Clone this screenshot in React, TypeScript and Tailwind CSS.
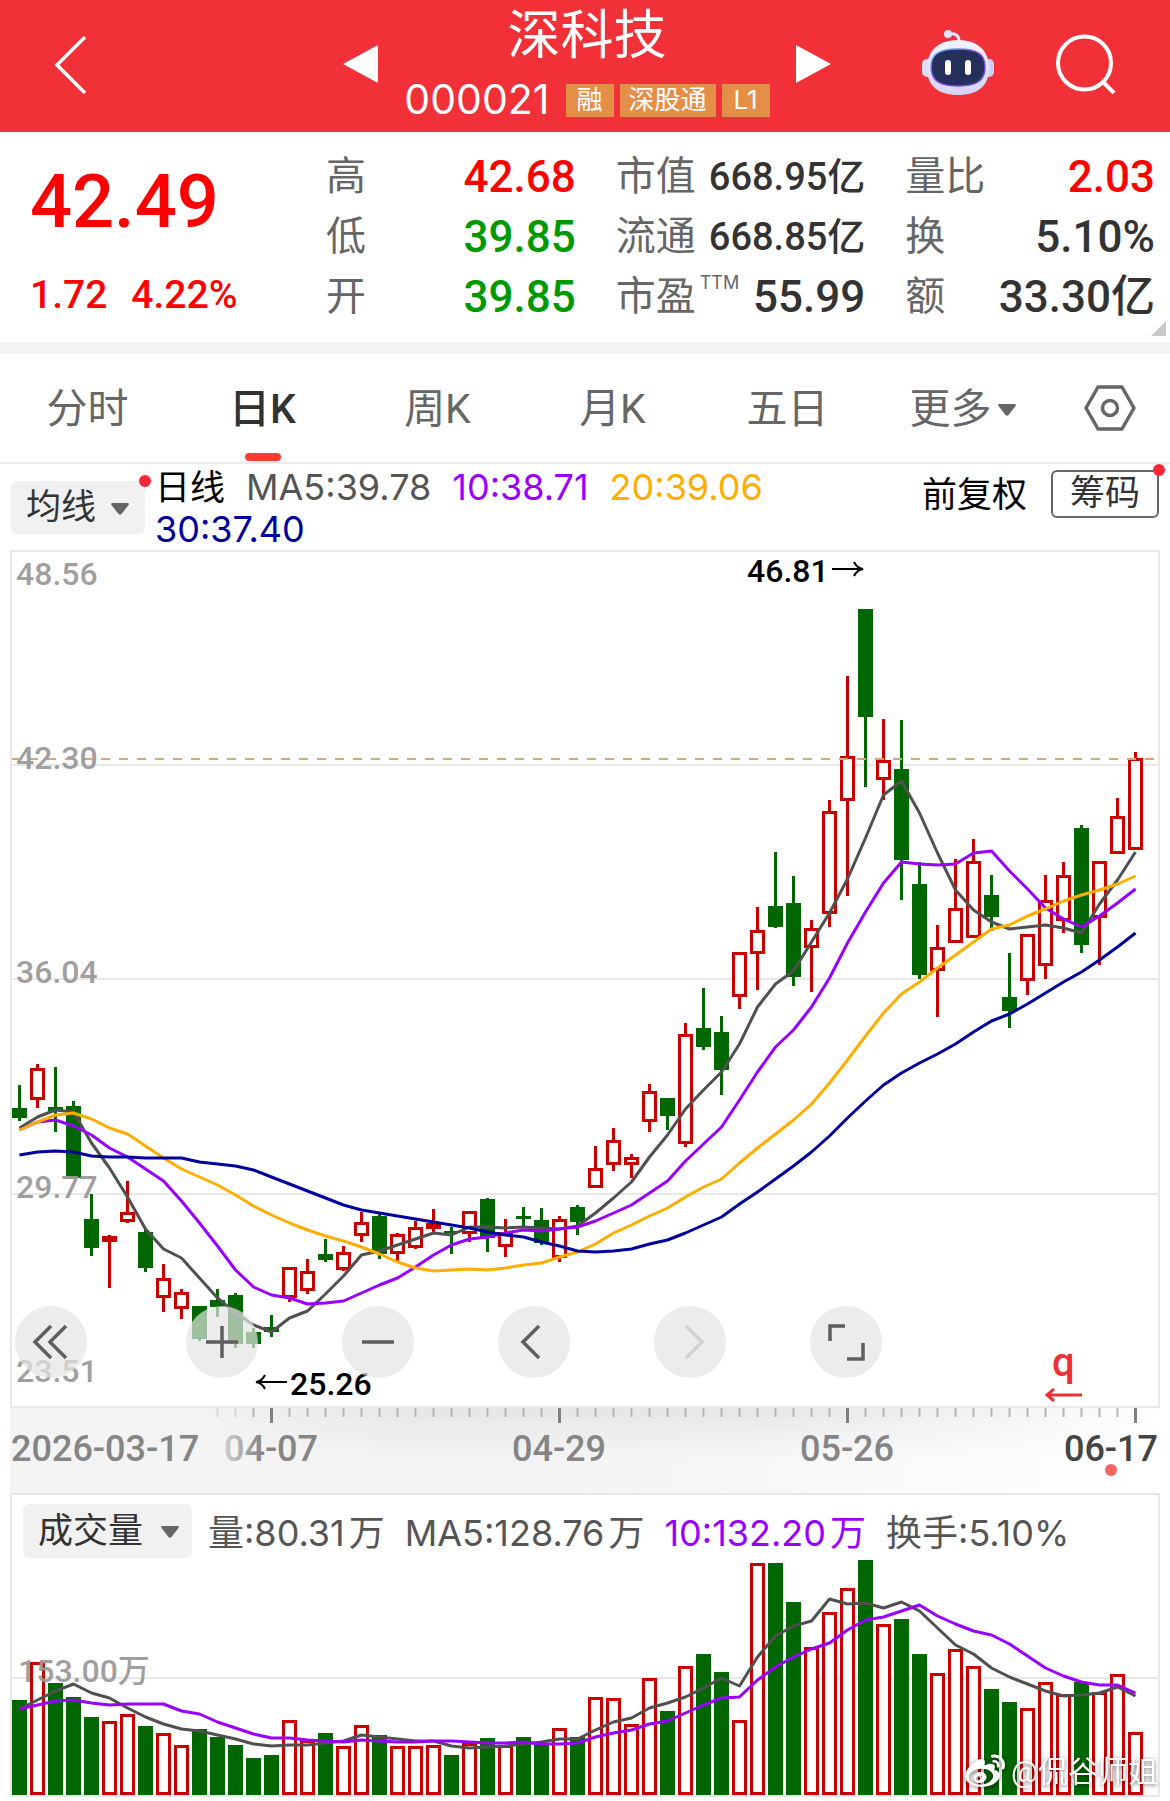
import { useState } from "react"
import { FaWeibo } from "react-icons/fa"

type Candle = [dir: "u" | "d", high: number, low: number, top: number, bottom: number]

const STEP = 18
const FIRST_X = 19.5

const candles: Candle[] = [
  ["d", 1085, 1121, 1108, 1118], ["u", 1064, 1108, 1068, 1100], ["d", 1067, 1132, 1107, 1111],
  ["d", 1101, 1179, 1106, 1178], ["d", 1194, 1256, 1219, 1248], ["u", 1235, 1288, 1236, 1242],
  ["u", 1181, 1223, 1212, 1222], ["d", 1230, 1272, 1232, 1268], ["u", 1264, 1312, 1278, 1298],
  ["u", 1289, 1319, 1292, 1309], ["d", 1306, 1341, 1306, 1339], ["d", 1289, 1317, 1300, 1307],
  ["d", 1293, 1348, 1295, 1344], ["d", 1328, 1348, 1332, 1344], ["d", 1315, 1337, 1327, 1332],
  ["u", 1267, 1302, 1267, 1298], ["u", 1259, 1294, 1271, 1291], ["d", 1239, 1262, 1254, 1260],
  ["u", 1246, 1271, 1252, 1270], ["u", 1212, 1242, 1222, 1236], ["d", 1213, 1259, 1216, 1254],
  ["u", 1233, 1263, 1234, 1254], ["u", 1221, 1249, 1227, 1248], ["u", 1209, 1232, 1223, 1229],
  ["d", 1227, 1254, 1231, 1233], ["u", 1211, 1242, 1211, 1234], ["d", 1198, 1252, 1199, 1238],
  ["u", 1219, 1257, 1232, 1247], ["d", 1207, 1227, 1216, 1219], ["d", 1208, 1245, 1220, 1243],
  ["u", 1216, 1262, 1219, 1258], ["d", 1205, 1235, 1207, 1222], ["u", 1146, 1188, 1168, 1188],
  ["u", 1128, 1171, 1140, 1165], ["u", 1154, 1178, 1157, 1165], ["u", 1084, 1132, 1091, 1122],
  ["d", 1098, 1130, 1098, 1116], ["u", 1023, 1147, 1034, 1144], ["d", 988, 1050, 1028, 1047],
  ["d", 1016, 1095, 1032, 1070], ["u", 952, 1009, 952, 997], ["u", 907, 990, 930, 954],
  ["d", 852, 928, 906, 927], ["d", 876, 986, 903, 977], ["u", 920, 992, 928, 948],
  ["u", 800, 927, 811, 914], ["u", 676, 896, 756, 801], ["d", 609, 787, 609, 717],
  ["u", 719, 800, 760, 780], ["d", 720, 900, 769, 860], ["d", 862, 979, 884, 975],
  ["u", 925, 1017, 947, 971], ["u", 859, 943, 908, 943], ["u", 839, 938, 861, 938],
  ["d", 875, 931, 895, 917], ["d", 953, 1028, 997, 1011], ["u", 934, 995, 934, 981],
  ["u", 875, 979, 900, 966], ["u", 862, 933, 875, 921], ["d", 825, 953, 828, 945],
  ["u", 861, 965, 861, 918], ["u", 798, 854, 816, 854], ["u", 752, 850, 758, 850],
]

const ma5 = [
  1128, 1117, 1110, 1112, 1143, 1168, 1197, 1229, 1249, 1258, 1278, 1298, 1313, 1325, 1332, 1318, 1311, 1294, 1276, 1255, 1251,
  1245, 1239, 1233, 1235, 1227, 1227, 1228, 1227, 1228, 1229, 1226, 1213, 1198, 1182, 1157, 1135, 1109, 1090, 1072, 1044, 1007,
  984, 971, 942, 913, 879, 838, 795, 781, 813, 853, 890, 910, 922, 929, 927, 925, 928, 933, 904, 880, 852,
]
const ma10 = [
  1130, 1122, 1120, 1126, 1135, 1148, 1157, 1169, 1181, 1201, 1223, 1246, 1270, 1287, 1295, 1298, 1304, 1303, 1301, 1293, 1285,
  1278, 1267, 1255, 1245, 1239, 1237, 1233, 1230, 1231, 1229, 1227, 1221, 1213, 1205, 1193, 1181, 1161, 1144, 1127, 1100, 1072,
  1047, 1030, 1007, 978, 943, 912, 883, 862, 864, 865, 864, 853, 851, 871, 889, 908, 919, 927, 916, 903, 889,
]
const ma20 = [
  1130, 1122, 1115, 1113, 1119, 1128, 1134, 1146, 1158, 1169, 1177, 1185, 1195, 1206, 1215, 1223, 1230, 1236, 1241, 1247, 1254,
  1262, 1268, 1271, 1270, 1269, 1270, 1268, 1265, 1263, 1257, 1252, 1244, 1233, 1225, 1216, 1208, 1197, 1187, 1179, 1163, 1148,
  1134, 1120, 1104, 1083, 1060, 1036, 1013, 994, 982, 968, 955, 942, 929, 925, 916, 909, 901, 895, 890, 884, 876,
]
const ma30 = [
  1155, 1152, 1151, 1152, 1156, 1157, 1157, 1158, 1158, 1158, 1162, 1164, 1166, 1170, 1177, 1184, 1191, 1198, 1205, 1210, 1213,
  1216, 1219, 1222, 1225, 1228, 1232, 1235, 1237, 1242, 1246, 1251, 1252, 1251, 1249, 1244, 1240, 1233, 1225, 1217, 1204, 1192,
  1179, 1166, 1152, 1136, 1118, 1101, 1085, 1073, 1063, 1054, 1044, 1032, 1021, 1014, 1004, 993, 982, 972, 960, 947, 933,
]

const volumes = [
  1700, 1662, 1683, 1697, 1717, 1721, 1714, 1726, 1733, 1745, 1729, 1737, 1745, 1758, 1755, 1720, 1740, 1733, 1746, 1725, 1735,
  1746, 1746, 1745, 1755, 1743, 1738, 1745, 1737, 1743, 1728, 1737, 1697, 1698, 1724, 1678, 1711, 1666, 1654, 1672, 1720, 1563,
  1563, 1602, 1647, 1612, 1588, 1560, 1624, 1619, 1654, 1673, 1649, 1666, 1689, 1702, 1708, 1682, 1694, 1682, 1692, 1674, 1732,
]
const vol5 = [
  1709, 1700, 1691, 1684, 1693, 1698, 1708, 1717, 1724, 1729, 1731, 1735, 1739, 1744, 1746, 1745, 1745, 1743, 1741, 1735, 1737,
  1739, 1741, 1741, 1746, 1748, 1747, 1746, 1744, 1742, 1739, 1739, 1730, 1722, 1718, 1708, 1703, 1697, 1688, 1678, 1686, 1657,
  1636, 1626, 1621, 1599, 1604, 1603, 1608, 1602, 1611, 1628, 1645, 1654, 1668, 1677, 1684, 1691, 1696, 1695, 1693, 1687, 1696,
]
const vol10 = [
  1709, 1705, 1701, 1700, 1703, 1705, 1704, 1704, 1704, 1711, 1714, 1722, 1728, 1734, 1738, 1738, 1740, 1741, 1742, 1740, 1741,
  1742, 1742, 1741, 1741, 1742, 1743, 1743, 1742, 1744, 1744, 1743, 1737, 1733, 1730, 1724, 1721, 1713, 1705, 1698, 1697, 1680,
  1667, 1657, 1649, 1643, 1630, 1620, 1617, 1611, 1605, 1616, 1624, 1631, 1635, 1644, 1656, 1668, 1676, 1682, 1685, 1685, 1693,
]

const stats = [
  { label: "高", value: "42.68", color: "text-[#ff0000]" },
  { label: "市值", value: "668.95亿", color: "text-[#333]", small: true },
  { label: "量比", value: "2.03", color: "text-[#ff0000]" },
  { label: "低", value: "39.85", color: "text-[#009900]" },
  { label: "流通", value: "668.85亿", color: "text-[#333]", small: true },
  { label: "换", value: "5.10%", color: "text-[#333]" },
  { label: "开", value: "39.85", color: "text-[#009900]" },
  { label: "市盈", sup: "TTM", value: "55.99", color: "text-[#333]" },
  { label: "额", value: "33.30亿", color: "text-[#333]" },
]

const tabs = ["分时", "日K", "周K", "月K", "五日", "更多"]

const tools = [
  { name: "最早", d: "M36 20L20 36L36 52M51 20L35 36L51 52" },
  { name: "放大", d: "M20 36H52M36 20V52" },
  { name: "缩小", d: "M20 36H52" },
  { name: "左移", d: "M41 20L25 36L41 52" },
  { name: "右移", d: "M32 20L48 36L32 52", disabled: true },
  { name: "全屏", d: "M35 20H20V35M37 53H53V37" },
]

const xAt = (i: number) => FIRST_X + i * STEP
const toPoints = (ys: number[]) => ys.map((y, i) => `${xAt(i)},${y}`).join(" ")

function Line({ ys, color }: { ys: number[]; color: string }) {
  return <polyline points={toPoints(ys)} fill="none" stroke={color} strokeWidth="3" strokeLinejoin="round" />
}

function Caret() {
  return (
    <svg viewBox="0 0 18 12" className="w-[18px] h-3 shrink-0" fill="#666" aria-hidden="true">
      <path d="M1 0H17Q18.500 .5 17.500 2L10.500 11Q9 12.500 7.500 11L.5 2Q-.5 .5 1 0Z" />
    </svg>
  )
}

function Robot() {
  return (
    <svg viewBox="0 0 72 67" className="w-[72px] h-[67px]" aria-hidden="true">
      <defs>
        <linearGradient id="shell" x1="0" y1="0" x2="0" y2="1">
          <stop offset="0" stopColor="#f4f4ff" />
          <stop offset="1" stopColor="#d3d4f5" />
        </linearGradient>
        <linearGradient id="rim" x1="0" y1="0" x2="1" y2="1">
          <stop offset="0" stopColor="#58c8ee" />
          <stop offset="0.5" stopColor="#8c3ee8" />
          <stop offset="1" stopColor="#5b4df0" />
        </linearGradient>
      </defs>
      <path d="M26 5C33 4 37 6 37 12" fill="none" stroke="#e2e3fa" strokeWidth="3" />
      <circle cx="26" cy="5" r="4" fill="#dfe6fb" />
      <rect x="0" y="30" width="10" height="18" rx="5" fill="#dcdcf8" />
      <rect x="62" y="30" width="10" height="18" rx="5" fill="#cfcff5" />
      <path d="M36 11C56 11 67 22 67 39C67 57 56 66 36 66C16 66 5 57 5 39C5 22 16 11 36 11Z" fill="url(#shell)" />
      <path d="M36 20C55 20 63 25 63 38C63 52 54 57 36 57C18 57 9 52 9 38C9 25 17 20 36 20Z" fill="#25305a" stroke="url(#rim)" strokeWidth="1.500" />
      <rect x="23" y="31" width="6" height="15" rx="3" fill="#fff" />
      <rect x="43" y="31" width="6" height="15" rx="3" fill="#fff" />
    </svg>
  )
}

function Header() {
  return (
    <header className="grid grid-cols-[1fr_488px_1fr] items-center h-[132px] bg-[#f23037] text-white">
      <button aria-label="返回" className="justify-self-start ml-[54px] pb-0.5">
        <svg viewBox="0 0 32 58" className="w-8 h-[58px]" fill="none" stroke="#fff" strokeWidth="3.500">
          <path d="M31 1L3 29L31 57" />
        </svg>
      </button>

      <div className="flex items-center justify-between ml-0.5 -mr-0.5">
        <button aria-label="上一只" className="pb-1">
          <svg viewBox="0 0 35 38" className="w-[35px] h-[38px]" fill="#fff"><path d="M35 0V38L0 19Z" /></svg>
        </button>
        <div className="flex flex-col items-center pt-1.5">
          <h1 className="text-[53px] leading-[60px]">深科技</h1>
          <div className="flex items-center gap-1.5 h-[66px] pt-0.5">
            <span className="font-[Inter] text-[41px] mr-2.5">000021</span>
            <span className="h-[33px] leading-8 px-[11px] text-[26px] bg-[#e58e48]">融</span>
            <span className="h-[33px] leading-8 px-[9px] text-[26px] bg-[#e58e48]">深股通</span>
            <span className="h-[33px] leading-8 px-3 text-[26px] bg-[#e58e48] font-[Inter]">L1</span>
          </div>
        </div>
        <button aria-label="下一只" className="pb-1">
          <svg viewBox="0 0 35 38" className="w-[35px] h-[38px]" fill="#fff"><path d="M0 0V38L35 19Z" /></svg>
        </button>
      </div>

      <div className="flex items-center justify-end gap-[62px] pr-[54px]">
        <button aria-label="智能助手" className="pb-2"><Robot /></button>
        <button aria-label="搜索" className="pb-1">
          <svg viewBox="0 0 60 60" className="w-[60px] h-[60px]" fill="none" stroke="#fff" strokeWidth="4">
            <circle cx="28.500" cy="29" r="26.500" />
            <path d="M47 48L58 59" />
          </svg>
        </button>
      </div>
    </header>
  )
}

function Quote() {
  return (
    <section className="relative flex h-[210px] pt-[15px] font-medium">
      <div className="w-[326px] shrink-0 pl-[30px] text-[#ff0000]">
        <div className="text-[74px] leading-[110px]">42.49</div>
        <div className="flex gap-6 text-[39px] leading-[76px]">
          <span>1.72</span>
          <span>4.22%</span>
        </div>
      </div>
      <dl className="flex-1 grid grid-cols-3 gap-x-10 auto-rows-[60px] pr-[15px]">
        {stats.map((s) => (
          <div key={s.label} className="flex items-center justify-between whitespace-nowrap">
            <dt className="flex text-[40px] leading-[60px] font-normal text-[#666]">
              {s.label}
              {s.sup && <sup className="top-0 pt-1 pl-1 text-[18px] leading-6 font-[Inter]">{s.sup}</sup>}
            </dt>
            <dd className={`${s.small ? "text-[38px]" : "text-[44px]"} leading-[60px] ${s.color}`}>{s.value}</dd>
          </div>
        ))}
      </dl>
      <svg viewBox="0 0 15 15" className="absolute right-1 bottom-1.5 w-[15px] h-[15px]" fill="#c9c9c9" aria-hidden="true">
        <path d="M15 0V15H0Z" />
      </svg>
    </section>
  )
}

function Tabs() {
  const [active, setActive] = useState("日K")

  return (
    <nav className="flex h-[108px] border-t-[12px] border-b-2 border-t-[#f4f4f4] border-b-[#ebebeb] box-content text-[41px] text-[#666]">
      {tabs.map((t) => (
        <button
          key={t}
          onClick={() => setActive(t)}
          className={`relative flex-1 flex items-center justify-center gap-1.5 pt-1 ${t === active ? "font-medium text-[#333]" : ""}`}
        >
          {t}
          {t === "更多" && <Caret />}
          {t === active && <span className="absolute bottom-px w-9 h-2 rounded-full bg-[#ff3b30]"></span>}
        </button>
      ))}
      <button aria-label="设置" className="w-[120px] flex items-center justify-center">
        <svg viewBox="0 0 52 46" className="w-[52px] h-[46px]" fill="none" stroke="#666" strokeWidth="3.500" strokeLinejoin="round">
          <path d="M14 2H38L50 23L38 44H14L2 23Z" />
          <circle cx="26" cy="23" r="7.500" />
        </svg>
      </button>
    </nav>
  )
}

function Legend() {
  return (
    <div className="flex h-[86px] pt-0.5 px-[11px]">
      <button className="relative flex items-center justify-between w-[134px] h-[53px] mt-[15px] pt-0.5 pl-[15px] pr-4 shrink-0 rounded-md bg-[#f1f1f1] text-[35px] text-[#333]">
        均线
        <Caret />
        <span className="absolute -top-1.5 -right-1.5 w-3 h-3 rounded-full bg-[#fb2538]"></span>
      </button>
      <div className="flex flex-wrap content-start gap-x-[21px] w-[660px] ml-2.5 text-[36px] leading-[42px] font-[Inter,'Noto_Sans_CJK_SC',sans-serif]">
        <span className="text-[35px] text-black">日线</span>
        <span className="text-[#555]">MA5:39.78</span>
        <span className="text-[#9900ff]">10:38.71</span>
        <span className="text-[#ffae00]">20:39.06</span>
        <span className="text-[#00009c]">30:37.40</span>
      </div>
      <button className="ml-auto mr-6 h-[60px] text-[35px] text-black">前复权</button>
      <button className="relative w-[108px] h-12 mt-1 border-2 border-[#666] rounded-md text-[35px] leading-[44px] text-[#333]">
        筹码
        <span className="absolute -top-2 -right-2 w-3 h-3 rounded-full bg-[#fb2538]"></span>
      </button>
    </div>
  )
}

function PriceChart() {
  return (
    <div className="relative border-2 border-[#e8e8e8]">
      <svg viewBox="12 552 1146 854" className="block w-full font-medium text-[32px]" role="img" aria-label="日K线图">
        <path d="M12 765H1158M12 979H1158M12 1194H1158" stroke="#e8e8e8" strokeWidth="2" />
        {candles.map(([dir, high, low, top, bottom], i) => {
          const x = xAt(i)
          return dir === "u" ? (
            <g key={i} fill="none" stroke="#c80000" strokeWidth="3">
              <path d={`M${x} ${high}V${top}M${x} ${bottom}V${low}`} />
              <rect x={x - 6} y={top + 1.5} width="12" height={bottom - top - 3} fill="#fff" />
            </g>
          ) : (
            <g key={i} fill="#006600">
              <rect x={x - 1.5} y={high} width="3" height={low - high} />
              <rect x={x - 7.5} y={top} width="15" height={bottom - top} />
            </g>
          )
        })}
        <path d="M11 759H1158" stroke="#d9a866" strokeWidth="2" strokeDasharray="9 9" />
        <Line ys={ma5} color="#505050" />
        <Line ys={ma10} color="#9900ff" />
        <Line ys={ma20} color="#ffae00" />
        <Line ys={ma30} color="#00009c" />

        <g fill="#999" fillOpacity="0.95">
          <text x="16" y="585">48.56</text>
          <text x="16" y="769">42.30</text>
          <text x="16" y="983">36.04</text>
          <text x="16" y="1198">29.77</text>
          <text x="16" y="1382">23.51</text>
        </g>
        <g fill="#000">
          <text x="747" y="582">46.81</text>
          <text x="290" y="1395">25.26</text>
        </g>
        <g fill="none" stroke="#000" strokeWidth="2">
          <path d="M832 569H863M854 562Q857 568 863 569Q857 570 854 576" />
          <path d="M287 1382H256M265 1375Q262 1381 256 1382Q262 1383 265 1389" />
        </g>
        <text x="1052" y="1376" fill="#f03030" className="text-[40px]">q</text>
        <path d="M1082 1395H1047M1054 1389L1047 1395L1054 1401" fill="none" stroke="#f03030" strokeWidth="3" />
      </svg>

      <div className="absolute left-[3px] bottom-[28px] flex gap-[84px]">
        {tools.map((t, i) => (
          <button
            key={t.name}
            aria-label={t.name}
            disabled={t.disabled}
            className={`w-[72px] h-[72px] rounded-full bg-[#e4e4e4]/70 ${i === 0 ? "mr-[15px]" : ""} ${t.disabled ? "text-[#d2d2d2]" : "text-[#5f5f5f]"}`}
          >
            <svg viewBox="0 0 72 72" fill="none" stroke="currentColor" strokeWidth="3.500">
              <path d={t.d} />
            </svg>
          </button>
        ))}
      </div>
    </div>
  )
}

function DateAxis() {
  // minor ticks only start once the pinned start date is cleared
  const ticks = candles.map((_, i) => i).filter((i) => i >= 11)

  return (
    <svg viewBox="10 1408 1150 85" className="block w-full font-medium text-[36px]" role="img" aria-label="日期">
      <defs>
        <linearGradient id="strip" x1="0" y1="0" x2="1" y2="0">
          <stop offset="0.5" stopColor="#f4f4f4" />
          <stop offset="1" stopColor="#ffffff" />
        </linearGradient>
        <linearGradient id="shade" x1="0" y1="0" x2="0" y2="1">
          <stop offset="0" stopColor="#e6e6e6" />
          <stop offset="1" stopColor="#e6e6e6" stopOpacity="0" />
        </linearGradient>
        <linearGradient id="fade" x1="0" y1="0" x2="1" y2="0">
          <stop offset="0.15" stopColor="#000" />
          <stop offset="0.35" stopColor="#fff" />
          <stop offset="0.65" stopColor="#fff" />
          <stop offset="1" stopColor="#000" />
        </linearGradient>
        <linearGradient id="first" x1="0" y1="0" x2="1" y2="0">
          <stop offset="0" stopColor="#d0d0d0" />
          <stop offset="0.4" stopColor="#858585" />
        </linearGradient>
        <mask id="sides"><rect x="10" y="1408" width="1150" height="85" fill="url(#fade)" /></mask>
      </defs>
      <rect x="10" y="1408" width="1150" height="85" fill="url(#strip)" />
      <rect x="10" y="1408" width="1150" height="50" fill="url(#shade)" mask="url(#sides)" />
      {ticks.map((i) => {
        const major = (i - 14) % 16 === 0
        return (
          <path
            key={i}
            d={`M${xAt(i)} 1408V${major ? 1423 : 1417}`}
            stroke={major ? "#808080" : "#b4b4b4"}
            strokeOpacity={i < 13 ? 0.4 : 1}
            strokeWidth={major ? 3 : 2}
          />
        )
      })}
      <g fill="#858585">
        <text x="11" y="1461">2026-03-17</text>
        <text x="271" y="1461" textAnchor="middle" fill="url(#first)">04-07</text>
        <text x="559" y="1461" textAnchor="middle">04-29</text>
        <text x="847" y="1461" textAnchor="middle">05-26</text>
        <text x="1158" y="1461" textAnchor="end" fill="#444">06-17</text>
      </g>
      <circle cx="1111" cy="1470" r="6" fill="#f56363" />
    </svg>
  )
}

function VolumeChart() {
  return (
    <div className="relative border-2 border-[#e8e8e8]">
      <div className="flex items-start h-[65px] pt-[9px] pl-[11px] text-[36px] text-[#555]">
        <button className="flex items-center justify-between w-[169px] h-[54px] pt-0.5 pl-[15px] pr-[13px] mr-4 rounded-md bg-[#f1f1f1] text-[35px] leading-[52px] text-[#333]">
          成交量
          <Caret />
        </button>
        <div className="flex gap-5 leading-[58px] whitespace-nowrap font-[Inter,'Noto_Sans_CJK_SC',sans-serif]">
          <span>量:80.31<span className="ml-1">万</span></span>
          <span>MA5:128.76<span className="ml-1">万</span></span>
          <span className="text-[#9900ff]">10:132.20<span className="ml-1">万</span></span>
          <span>换手:5.10%</span>
        </div>
      </div>
      <svg viewBox="12 1560 1146 235" className="block w-full font-medium text-[32px]" role="img" aria-label="成交量图">
        <path d="M12 1678H1158" stroke="#e8e8e8" strokeWidth="2" />
        {volumes.map((top, i) =>
          candles[i][0] === "u" ? (
            <rect key={i} x={xAt(i) - 6} y={top + 1.5} width="12" height={1792 - top} fill="#fff" stroke="#c80000" strokeWidth="3" />
          ) : (
            <rect key={i} x={xAt(i) - 7.5} y={top} width="15" height={1795 - top} fill="#006600" />
          )
        )}
        <text x="18" y="1682" fill="#999" fillOpacity="0.95">153.00万</text>
        <Line ys={vol5} color="#505050" />
        <Line ys={vol10} color="#9900ff" />
      </svg>
      <div className="absolute right-0 bottom-0 flex items-center gap-1.5 text-[30px] leading-[46px] text-white drop-shadow-[0_1px_2px_rgba(0,0,0,0.6)]">
        <FaWeibo size={40} />
        <span>@侃谷师姐</span>
      </div>
    </div>
  )
}

export default function App() {
  return (
    <div className="w-full bg-white pb-1 font-[Roboto,'Noto_Sans_CJK_SC',sans-serif]" lang="zh-CN">
      <Header />
      <Quote />
      <Tabs />
      <main>
        <Legend />
        <div className="px-2.5">
          <PriceChart />
          <DateAxis />
          <VolumeChart />
        </div>
      </main>
    </div>
  )
}
